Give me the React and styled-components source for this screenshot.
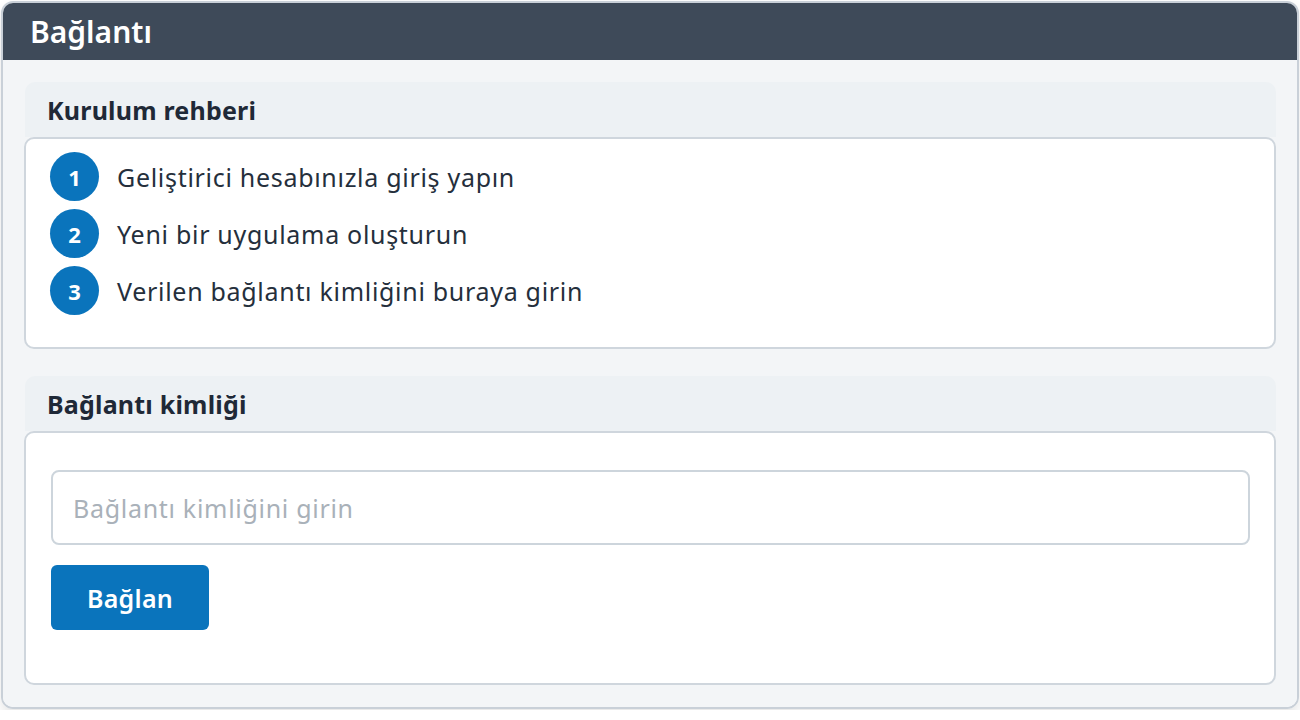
import React from 'react';
import styled, { createGlobalStyle } from 'styled-components';

const GlobalStyle = createGlobalStyle`
  body {
    margin: 0;
    background: #ffffff;
    font-family: "Noto Sans", "Open Sans", sans-serif;
  }
`;

const STEPS = [
  'Geliştirici hesabınızla giriş yapın',
  'Yeni bir uygulama oluşturun',
  'Verilen bağlantı kimliğini buraya girin',
];

const App = () => {
  return (
    <>
      <GlobalStyle />
      <Panel>
        <PanelHeader>
          <PanelTitle>Bağlantı</PanelTitle>
        </PanelHeader>
        <PanelBody>
          <Section>
            <SectionHeader>
              <SectionTitle>Kurulum rehberi</SectionTitle>
            </SectionHeader>
            <SectionContent $pad="13px 24px 32px">
              <StepList>
                {STEPS.map((step, index) => (
                  <Step key={step}>
                    <StepNumber>{index + 1}</StepNumber>
                    <StepText>{step}</StepText>
                  </Step>
                ))}
              </StepList>
            </SectionContent>
          </Section>

          <Section>
            <SectionHeader>
              <SectionTitle>Bağlantı kimliği</SectionTitle>
            </SectionHeader>
            <SectionContent $pad="37px 24px 53px 25px">
              <Form>
                <Input placeholder="Bağlantı kimliğini girin" />
                <Button type="button">Bağlan</Button>
              </Form>
            </SectionContent>
          </Section>
        </PanelBody>
      </Panel>
    </>
  );
};

const Panel = styled.div`
  margin: 1px;
  border: 2px solid #c9d0d8;
  border-radius: 12px;
  overflow: hidden;
  box-shadow: 0 6px 12px rgba(0, 0, 0, 0.1);
`;

const PanelHeader = styled.div`
  height: 57px;
  background: #3e4a59;
  display: flex;
  align-items: center;
  padding: 0 27px;
`;

const PanelTitle = styled.h1`
  margin: 0;
  font-size: 30px;
  font-weight: 600;
  color: #ffffff;
`;

const PanelBody = styled.div`
  background: #f3f5f7;
  padding: 22px 21px 22px;
  display: flex;
  flex-direction: column;
  gap: 27px;
`;

const Section = styled.section`
  display: flex;
  flex-direction: column;
`;

const SectionHeader = styled.div`
  height: 55px;
  margin-left: 1px;
  background: #edf1f4;
  border-radius: 10px 10px 0 0;
  display: flex;
  align-items: center;
  padding: 0 22px;
`;

const SectionTitle = styled.h2`
  margin: 0;
  font-size: 25px;
  font-weight: 700;
  letter-spacing: 0.2px;
  color: #1f2937;
`;

const SectionContent = styled.div`
  background: #ffffff;
  border: 2px solid #cfd6dd;
  border-radius: 10px;
  padding: ${(p) => p.$pad};
`;

const StepList = styled.ol`
  list-style: none;
  margin: 0;
  padding: 0;
  display: flex;
  flex-direction: column;
  gap: 8px;
`;

const Step = styled.li`
  display: flex;
  align-items: center;
  gap: 18px;
`;

const StepNumber = styled.span`
  width: 49px;
  height: 49px;
  border-radius: 50%;
  background: #0a74bc;
  color: #ffffff;
  font-size: 22px;
  font-weight: 700;
  display: flex;
  align-items: center;
  justify-content: center;
  flex-shrink: 0;
`;

const StepText = styled.span`
  font-size: 25px;
  letter-spacing: 0.7px;
  color: #252f3c;
`;

const Form = styled.div`
  display: flex;
  flex-direction: column;
  align-items: flex-start;
  gap: 20px;
`;

const Input = styled.input`
  box-sizing: border-box;
  width: 100%;
  height: 75px;
  border: 2px solid #cdd5dc;
  border-radius: 8px;
  padding: 0 20px;
  font-family: inherit;
  font-size: 25px;
  letter-spacing: 0.7px;
  color: #252f3c;
  outline: none;

  &::placeholder {
    color: #a9b1b9;
  }
`;

const Button = styled.button`
  width: 158px;
  height: 65px;
  border: none;
  border-radius: 6px;
  background: #0a74bc;
  color: #ffffff;
  font-family: inherit;
  font-size: 25px;
  font-weight: 600;
  letter-spacing: 0.3px;
  cursor: pointer;
`;

export default App;
